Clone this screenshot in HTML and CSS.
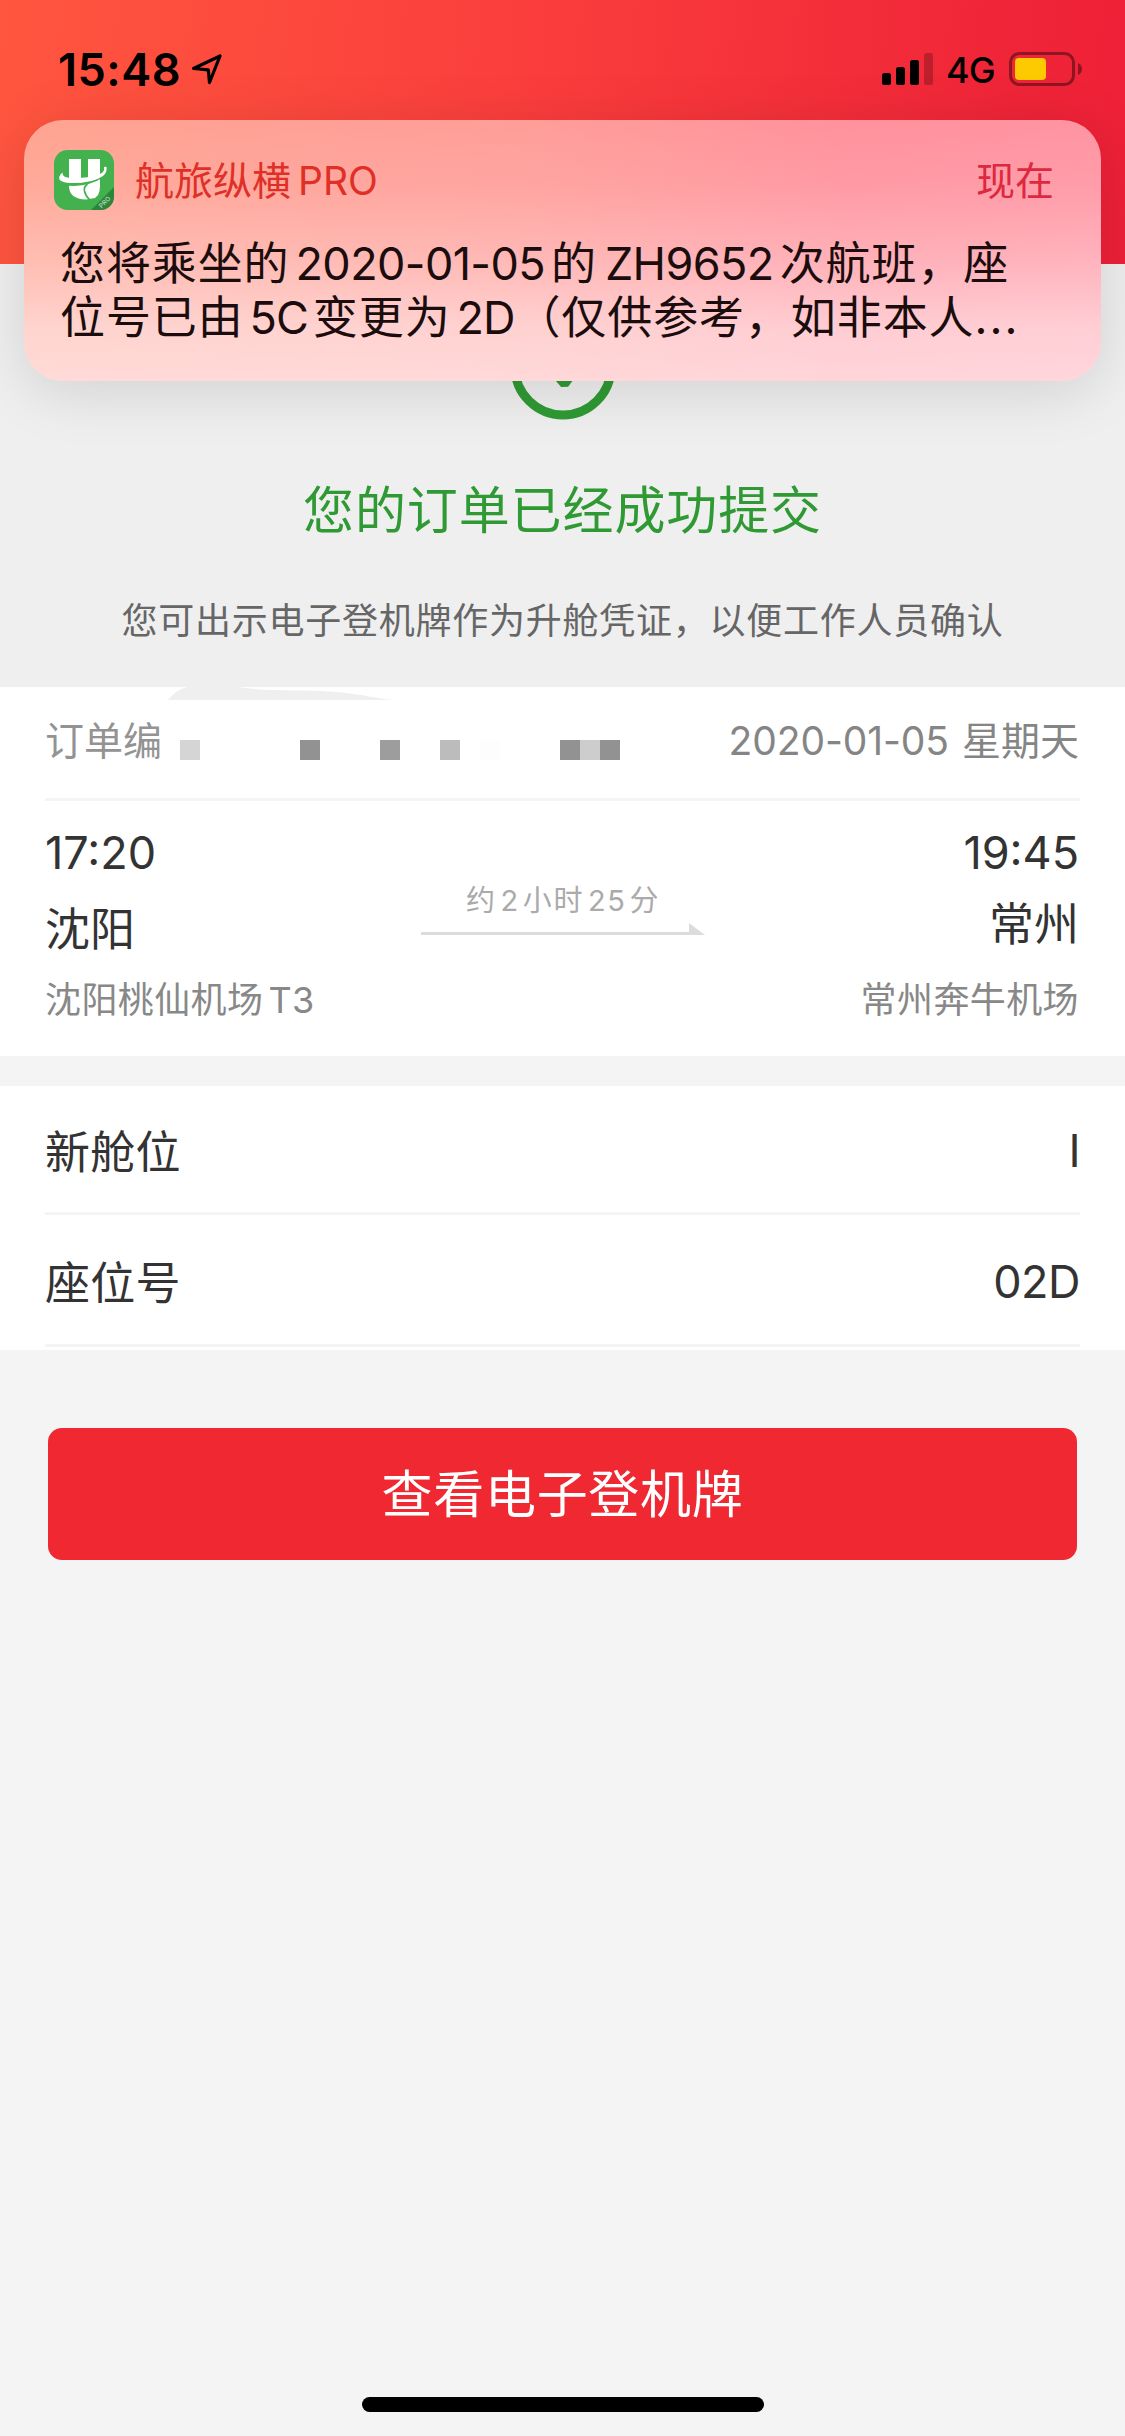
FILE: index.html
```html
<!DOCTYPE html>
<html lang="zh-CN">
<head>
<meta charset="utf-8">
<title>订单提交成功</title>
<link rel="stylesheet" href="styles.css">
</head>
<body>
<div class="screen">
  <header class="top">
    <div class="status">
      <span class="clock">15:48</span>
      <svg class="locate" width="34" height="34" viewBox="0 0 34 34"><path d="M3.5 16.5 30 4 19.500 30.500 18.300 17.800Z" fill="none" stroke="#000" stroke-width="3.200" stroke-linejoin="round"/></svg>
      <svg class="signal" width="51" height="33" viewBox="0 0 51 33"><rect y="20" width="9" height="12" rx="2.500"/><rect x="14" y="14" width="9" height="18" rx="2.500"/><rect x="28" y="7" width="9" height="25" rx="2.500"/><rect x="42" width="9" height="32" rx="2.500" opacity=".22"/></svg>
      <span class="network">4G</span>
      <svg class="battery" width="74" height="34" viewBox="0 0 74 34"><rect x="1.500" y="1.500" width="63" height="31" rx="9" fill="none" stroke="#000" stroke-opacity=".4" stroke-width="3"/><rect x="6" y="6" width="31" height="22" rx="4" fill="#fdc900"/><path d="M69 11q4 2 4 6t-4 6z" opacity=".4"/></svg>
    </div>
  </header>

  <section class="result">
    <svg class="done" width="106" height="106" viewBox="0 0 106 106"><circle cx="53" cy="53" r="48" fill="none" stroke="#2f9a33" stroke-width="9"/><path d="M34 46 54.500 70 80 36" fill="none" stroke="#2f9a33" stroke-width="9" stroke-linejoin="bevel"/></svg>
    <h1 class="headline">您的订单已经成功提交</h1>
    <p class="hint">您可出示电子登机牌作为升舱凭证，以便工作人员确认</p>
  </section>

  <section class="panel flight">
    <svg class="swoosh" width="228" height="13" viewBox="0 0 228 13"><path d="M0 13Q8 3 19 0H70C100 5 135 2 168 5S208 12 228 13Z" fill="#efefef"/></svg>
    <div class="order">
      <span class="order-label">订单编</span>
      <svg class="mosaic" width="440" height="20" viewBox="0 0 440 20"><path fill="#d5d5d5" d="M0 0h20v20H0z"/><path fill="#929292" d="M120 0h20v20h-20zM380 0h20v20h-20zM420 0h20v20h-20z"/><path fill="#9d9d9d" d="M200 0h20v20h-20z"/><path fill="#bcbcbc" d="M260 0h20v20h-20z"/><path fill="#fdfdfd" d="M300 0h20v20h-20z"/><path fill="#cdcdcd" d="M400 0h20v20h-20z"/></svg>
      <span class="order-date"><span class="day">2020-01-05</span>星期天</span>
    </div>
    <div class="route">
      <div class="stop">
        <div class="time">17:20</div>
        <div class="city">沈阳</div>
        <div class="airport">沈阳桃仙机场<span class="terminal">T3</span></div>
      </div>
      <div class="leg">
        <div class="duration">约<span class="num">2</span>小时<span class="num">25</span>分</div>
        <svg class="arrow" width="284" height="12" viewBox="0 0 284 12"><path d="M0 9h268V0l16 12H0z" fill="#dcdcdc"/></svg>
      </div>
      <div class="stop arrival">
        <div class="time">19:45</div>
        <div class="city">常州</div>
        <div class="airport">常州奔牛机场</div>
      </div>
    </div>
  </section>

  <section class="panel details">
    <div class="row"><span>新舱位</span><span class="value">I</span></div>
    <div class="row"><span>座位号</span><span class="value">02D</span></div>
  </section>

  <button class="primary">查看电子登机牌</button>
  <div class="home"></div>

  <aside class="notice">
    <div class="notice-head">
      <svg class="app" width="60" height="60" viewBox="0 0 60 60">
        <defs><clipPath id="tile"><rect width="60" height="60" rx="13.500"/></clipPath></defs>
        <g clip-path="url(#tile)">
          <path fill="#42b14e" d="M0 0h60v60H0z"/>
          <path fill="#2b853b" d="M60 37v23H37z"/>
          <path fill="#fff" d="M15 9h12v18q0 2 3.500 2t3.500-2V9h12v27q0 12-8 12.500-3 .5-6 1Q15 49 15 36z"/>
          <path d="M33.500 34q-4 3-3 7 1 5 5 8.500" fill="none" stroke="#42b14e" stroke-width="1.600"/>
          <path d="M10 33.500Q31 37 48 26.500" fill="none" stroke="#42b14e" stroke-width="3"/>
          <path fill="#fff" d="M8.500 22.500Q8 27.500 17 28 36 28.500 47 23.500q4-2.500 3-6.500 1.500-.5 2.500 0 1 5-3.500 9-10 7-29 7Q4 33 5.200 27q.8-3 3.300-4.500z"/>
        </g>
        <text class="badge" text-anchor="middle" transform="translate(52.200 53.800) rotate(-45)">PRO</text>
      </svg>
      <span class="app-name">航旅纵横<span class="pro">PRO</span></span>
      <span class="when">现在</span>
    </div>
    <div class="message">您将乘坐的<span class="en en-date">2020-01-05</span>的<span class="en en-flight">ZH9652</span>次航班，座</div>
    <div class="message">位号已由<span class="en en-old">5C</span>变更为<span class="en en-new">2D</span>（仅供参考，如非本人<span class="dots">...</span></div>
  </aside>
</div>
</body>
</html>
```
FILE: styles.css
```css
* { box-sizing: border-box; }
body { margin: 0; background: #f4f4f4; }
.screen {
  position: relative;
  display: flex;
  flex-direction: column;
  width: 1125px;
  height: 2436px;
  overflow: hidden;
  background: #f4f4f4;
  color: #333;
  font-family: Inter, "Noto Sans CJK SC", sans-serif;
  font-size: 45px;
}
.top {
  height: 264px;
  background: linear-gradient(95deg, #ff563f 0%, #fa3d3c 48%, #f02538 88%, #ee2038 100%);
}
.status {
  display: flex;
  align-items: center;
  height: 138px;
  padding: 0 42px 0 58px;
  color: #000;
}
.clock { width: 132px; font-weight: 600; letter-spacing: .5px; }
.signal { margin-left: auto; }
.network { width: 60px; margin: 2px 0 0 13px; font-size: 36px; font-weight: 500; letter-spacing: -1px; }
.battery { margin-left: 3px; }

.result {
  display: flex;
  flex-direction: column;
  align-items: center;
  height: 423px;
  padding-top: 50px;
  background: #efefef;
}
.headline {
  margin: 55px 0 0;
  color: #2f9a33;
  font-size: 51px;
  font-weight: 400;
  line-height: 72px;
  letter-spacing: .9px;
}
.hint {
  margin: 47px 0 0;
  color: #666;
  font-size: 36px;
  line-height: 54px;
  letter-spacing: .75px;
}

.panel { background: #fff; padding: 0 45px; }
.flight { height: 369px; }
.swoosh { display: block; margin-left: 123px; }
.order {
  display: flex;
  align-items: center;
  height: 101px;
  padding-bottom: 23px;
  border-bottom: 3px solid #f4f4f4;
  color: #939393;
  font-size: 39px;
}
.order-label { width: 135px; }
.mosaic { margin-top: 24px; }
.order-date { margin-left: auto; padding-right: 1px; color: #858585; }
.day { margin-right: 13px; letter-spacing: -.1px; }
.route { display: flex; justify-content: space-between; }
.stop { padding: 22px 0 0; width: 320px; }
.arrival { text-align: right; padding-right: 1px; }
.time { height: 60px; line-height: 60px; letter-spacing: 0; }
.city { height: 66px; margin-top: 14px; line-height: 66px; }
.arrival .city { margin-top: 9px; }
.airport { height: 54px; margin-top: 10px; color: #888; font-size: 36px; line-height: 54px; letter-spacing: .4px; }
.arrival .airport { margin-top: 15px; }
.terminal { margin-left: 5px; }
.leg { width: 284px; padding-top: 78px; text-align: center; }
.duration { height: 44px; padding-left: 1px; color: #aaa; font-size: 29px; line-height: 44px; letter-spacing: 1.600px; }
.num { margin: 0 3px 0 4px; }
.arrow { display: block; }

.details { height: 264px; margin-top: 30px; }
.row {
  display: flex;
  justify-content: space-between;
  align-items: center;
  height: 132px;
  padding-top: 2px;
  border-bottom: 3px solid #f4f4f4;
  letter-spacing: .3px;
}
.row:first-child { height: 129px; padding-top: 0; }
.value { margin-top: 2px; letter-spacing: -.5px; }

.primary {
  height: 132px;
  margin: 78px 48px 0;
  padding: 2px 0 0;
  border: 0;
  border-radius: 14px;
  background: #f02832;
  color: #fff;
  font: 51px/130px Inter, "Noto Sans CJK SC", sans-serif;
  letter-spacing: .7px;
}
.home { width: 402px; height: 15px; margin: auto auto 24px; border-radius: 8px; background: #000; }

.notice {
  position: absolute;
  left: 24px;
  top: 120px;
  width: 1077px;
  height: 261px;
  padding: 30px 47px 0 36px;
  border-radius: 39px;
  background:
    linear-gradient(rgba(255,245,247,0) 0%, rgba(255,245,247,.09) 25%, rgba(255,245,247,.3) 52%, rgba(255,245,247,.6) 80%, rgba(255,245,247,.68) 100%),
    linear-gradient(97deg, #ffa391 0%, #ff9d98 45%, #ff919c 75%, #ff94a2 100%);
  box-shadow: 0 10px 60px rgba(0,0,0,.13);
  color: #1b0d0d;
}
.notice-head { display: flex; align-items: center; height: 60px; font-size: 39px; line-height: 60px; color: #df3028; }
.app { margin: 0 21px 0 -6px; }
.app-name, .when { padding-top: 2px; }
.badge { fill: #a9d3ae; font-size: 6.500px; font-weight: 600; }
.pro { margin-left: 7px; }
.when { margin-left: auto; color: #dc2840; }
.message { display: flex; height: 54px; line-height: 54px; letter-spacing: .9px; white-space: nowrap; }
.notice-head + .message { margin-top: 27px; }
.en-date { margin: 0 6px; letter-spacing: -.6px; }
.en-flight { margin: 0 6px 0 8px; letter-spacing: -.6px; }
.en-old { margin: 0 5px 0 6px; letter-spacing: -1px; }
.en-new { margin: 0 1px 0 6px; letter-spacing: -1px; }
.dots { letter-spacing: 2px; }
```
